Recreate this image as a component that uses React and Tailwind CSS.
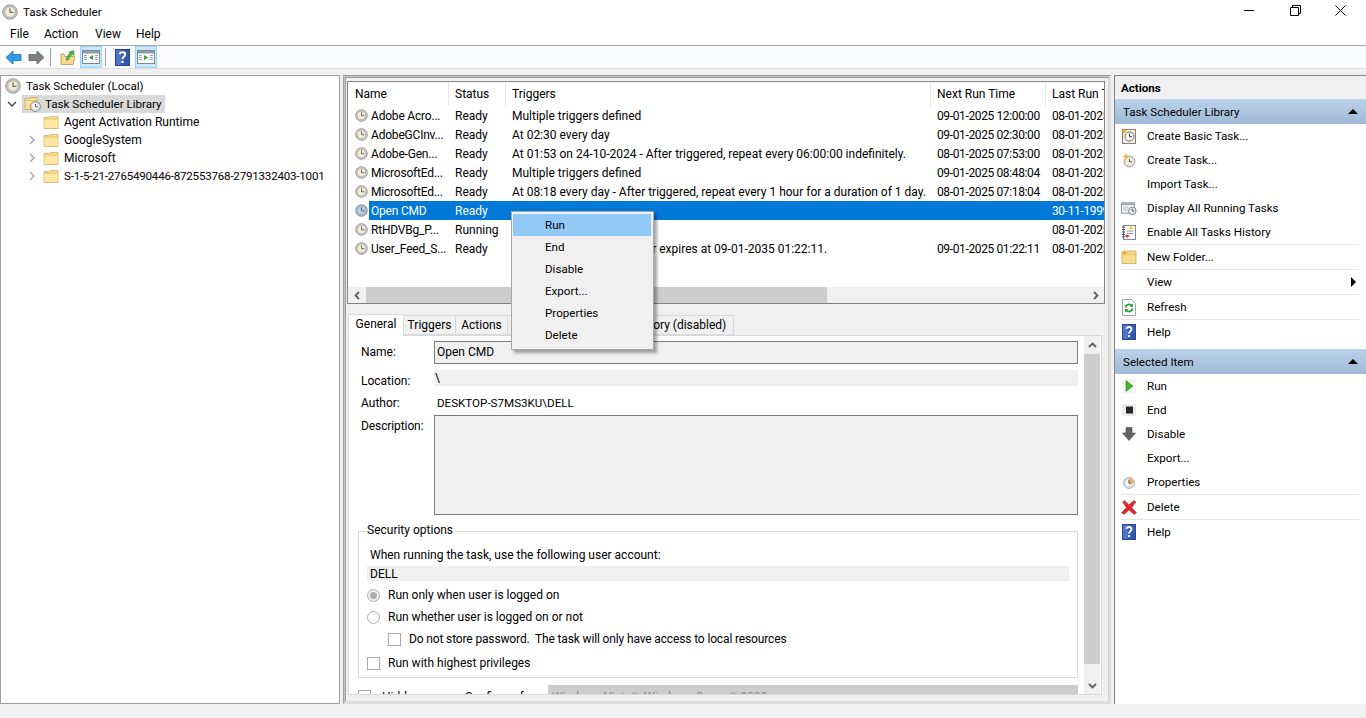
import React from "react";

const Clock = ({ s = 16, face = "#f4edd6", rim = "#c6c6c6", className = "" }) => (
  <svg width={s} height={s} viewBox="0 0 16 16" className={"shrink-0 " + className}>
    <circle cx="8" cy="8" r="7.3" fill={rim} stroke="#8d8d8d" strokeWidth="0.8" />
    <circle cx="8" cy="8" r="5.2" fill={face} stroke="#9c9c9c" strokeWidth="0.6" />
    <path d="M8 4.2V8.3H11.6" fill="none" stroke="#5a5a5a" strokeWidth="1.1" />
  </svg>
);

const Folder = ({ s = 16 }) => (
  <svg width={s} height={s} viewBox="0 0 16 16" className="shrink-0">
    <path d="M1 3.5V14.5H15V2.5H7L6 3.5Z" fill="#f7dc8f" stroke="#d0b06a" strokeWidth="0.8" />
    <path d="M1.5 5.5H14.5V14H1.5Z" fill="#fbe6a6" />
    <path d="M1.5 5H14.5" stroke="#e3bf6b" strokeWidth="0.8" />
  </svg>
);

const LibraryIcon = () => (
  <svg width="17" height="16" viewBox="0 0 17 16" className="shrink-0">
    <path d="M1 2.5V13.5H13V1.5H6.5L5.5 2.5Z" fill="#f8e09a" stroke="#c9a860" strokeWidth="0.8" />
    <path d="M1.5 4.5H12.5" stroke="#e3bf6b" strokeWidth="0.8" />
    <circle cx="11.5" cy="10.5" r="5" fill="#d9d9d9" stroke="#808080" strokeWidth="0.8" />
    <circle cx="11.5" cy="10.5" r="3.3" fill="#f4f4f4" />
    <path d="M11.5 8V10.7H13.8" fill="none" stroke="#555" strokeWidth="0.9" />
  </svg>
);

const Chevron = ({ open, className = "" }) => (
  <svg width="10" height="10" viewBox="0 0 10 10" className={"shrink-0 " + className}>
    {open ? (
      <path d="M1 3L5 7L9 3" fill="none" stroke="#404040" strokeWidth="1.3" />
    ) : (
      <path d="M3 1L7 5L3 9" fill="none" stroke="#a6a6a6" strokeWidth="1.4" />
    )}
  </svg>
);

const HelpIcon = ({ w = 15, h = 17 }) => (
  <svg width={w} height={h} viewBox="0 0 15 17" preserveAspectRatio="none" className="shrink-0">
    <rect x="0.5" y="0.5" width="14" height="16" fill="#3559ad" stroke="#27418a" />
    <rect x="1" y="1" width="5" height="15" fill="#4d74c9" />
    <path d="M4.8 5.2C5 2.6 10.2 2.4 10.2 5.4C10.2 7.6 7.5 7.6 7.5 10.2" fill="none" stroke="#fff" strokeWidth="2" />
    <rect x="6.4" y="11.8" width="2.2" height="2.2" fill="#fff" />
  </svg>
);

const PaneIcon = ({ dir }) => (
  <svg width="18" height="16" viewBox="0 0 18 16" className="shrink-0">
    <rect x="0.5" y="1.5" width="17" height="13" fill="#fff" stroke="#7c8a96" />
    <rect x="1" y="2" width="16" height="2.5" fill="#8f9ba6" />
    <rect x="2" y="6" width="3" height="1" fill="#9aa5ae" />
    <rect x="2" y="8" width="3" height="1" fill="#9aa5ae" />
    <rect x="2" y="10" width="3" height="1" fill="#9aa5ae" />
    <rect x="13" y="6" width="3" height="1" fill="#9aa5ae" />
    <rect x="13" y="8" width="3" height="1" fill="#9aa5ae" />
    <rect x="13" y="10" width="3" height="1" fill="#9aa5ae" />
    <path d={dir === "left" ? "M11 6V11L7 8.5Z" : "M7 6V11L11 8.5Z"} fill="#2fa52f" />
  </svg>
);

const Arrow = ({ color, edge, flip }) => (
  <svg width="17" height="15" viewBox="0 0 17 15" className={"shrink-0 " + (flip ? "-scale-x-100" : "")}>
    <path d="M1 7.5L8 1V4.5H16V10.5H8V14Z" fill={color} stroke={edge} strokeWidth="0.9" />
  </svg>
);

const UpFolder = () => (
  <svg width="16" height="17" viewBox="0 0 16 17" className="shrink-0">
    <path d="M1 5V15.5H13L15 7.5H5L4 5Z" fill="#f5d98c" stroke="#b8954d" strokeWidth="0.8" />
    <path d="M6 11C7 7 8 5.5 10 4.5L8.8 3L14 1.5L14 6.5L12.2 5.6C10.5 7 9 9 8.5 11Z" fill="#4fb34a" stroke="#2f8a2c" strokeWidth="0.5" />
  </svg>
);

const icons = {
  basic: (
    <svg width="16" height="17" viewBox="0 0 16 17">
      <rect x="1.5" y="1.5" width="13" height="14" fill="#f3ede0" stroke="#8a7f78" />
      <circle cx="8.5" cy="8.5" r="4.5" fill="#fff" stroke="#7a6a5a" />
      <path d="M8.5 5.5V8.7H11" fill="none" stroke="#444" />
      <path d="M3 0L4 2L6 3L4 4L3 6L2 4L0 3L2 2Z" fill="#f6a623" />
    </svg>
  ),
  create: (
    <svg width="16" height="16" viewBox="0 0 16 16">
      <circle cx="8.5" cy="9.5" r="5.5" fill="#d7d9dc" stroke="#a5a8ac" />
      <circle cx="8.5" cy="9.5" r="3.6" fill="#f7efdb" />
      <path d="M8.5 7V9.8H11" fill="none" stroke="#555" />
      <path d="M5 1L6 3.4L8.4 4.4L6 5.4L5 7.8L4 5.4L1.6 4.4L4 3.4Z" fill="#f3b233" />
    </svg>
  ),
  display: (
    <svg width="17" height="15" viewBox="0 0 17 15">
      <rect x="0.5" y="1.5" width="14" height="11" fill="#fff" stroke="#8b8f94" />
      <rect x="1" y="2" width="13" height="2" fill="#9aa0a6" />
      <path d="M2.5 6H8M2.5 8H7M2.5 10H7" stroke="#a8adb2" />
      <circle cx="12" cy="10" r="4" fill="#e4e6e8" stroke="#7d8186" />
      <path d="M12 7.8V10.2H14" fill="none" stroke="#444" />
    </svg>
  ),
  history: (
    <svg width="16" height="17" viewBox="0 0 16 17">
      <rect x="2.5" y="1.5" width="12" height="14" fill="#fdfdfd" stroke="#7e8a99" />
      <path d="M1 3H4M1 5.5H4M1 8H4M1 10.5H4M1 13H4" stroke="#44505f" />
      <path d="M6 7H12M6 9.5H12M6 12H9" stroke="#7d93b5" />
      <path d="M10 1L12.5 5H7.5Z" fill="#f5c84a" />
      <circle cx="6" cy="12" r="1.6" fill="#d73a2e" />
    </svg>
  ),
  newfolder: (
    <svg width="16" height="16" viewBox="0 0 16 16">
      <path d="M1 3V14.5H15V2H7L6 3Z" fill="#f8dd90" stroke="#c9a860" strokeWidth="0.8" />
      <path d="M1.5 5H14.5" stroke="#e3bf6b" />
      <path d="M3.5 0.5L4.5 2.5L6.5 3.5L4.5 4.5L3.5 6.5L2.5 4.5L0.5 3.5L2.5 2.5Z" fill="#f3a52a" />
    </svg>
  ),
  refresh: (
    <svg width="14" height="17" viewBox="0 0 14 17">
      <path d="M0.5 0.5H9.5L13.5 4.5V16.5H0.5Z" fill="#fff" stroke="#a0a4a8" />
      <path d="M3.5 8.5A3.6 3.6 0 0 1 10 7" fill="none" stroke="#2fa02f" strokeWidth="1.8" />
      <path d="M10.5 9.5A3.6 3.6 0 0 1 4 11" fill="none" stroke="#2fa02f" strokeWidth="1.8" />
      <path d="M11 4.5V8H7.6Z" fill="#2fa02f" />
      <path d="M3 13.5V10H6.4Z" fill="#2fa02f" />
    </svg>
  ),
  run: (
    <svg width="14" height="14" viewBox="0 0 14 14">
      <rect width="14" height="14" fill="#f5f5f5" />
      <path d="M4 1.5V12.5L11 7Z" fill="#43b02a" stroke="#2e8f1c" strokeWidth="0.6" />
    </svg>
  ),
  end: (
    <svg width="14" height="12" viewBox="0 0 14 12">
      <rect width="14" height="12" fill="#ececec" />
      <rect x="4" y="2.5" width="7" height="7" fill="#262626" />
    </svg>
  ),
  disable: (
    <svg width="14" height="14" viewBox="0 0 14 14">
      <path d="M4 0.5H10V6H13.5L7 13.5L0.5 6H4Z" fill="#636363" stroke="#4c4c4c" strokeWidth="0.6" />
    </svg>
  ),
  properties: (
    <svg width="12" height="13" viewBox="0 0 12 13">
      <circle cx="6" cy="7" r="5.5" fill="#ccd6e2" stroke="#b5bfca" />
      <circle cx="6" cy="7" r="3.6" fill="#fbf4df" />
      <path d="M6 1.5V7H11.5A5.5 5.5 0 0 0 6 1.5Z" fill="#eeb563" />
      <path d="M6 4V7.2H8.6" fill="none" stroke="#555" />
    </svg>
  ),
  del: (
    <svg width="16" height="15" viewBox="0 0 16 15">
      <path d="M1.5 2L3.5 0.5L8 4.8L12.8 0.5L15 2L10.8 7.5L15.5 12.8L13 14.5L8 10L3 14.5L0.5 12.8L5.2 7.5Z" fill="#e3262c" stroke="#b7383c" strokeWidth="0.5" />
    </svg>
  ),
  help: <HelpIcon w={14} h={16} />,
};

const rows = [
  ["Adobe Acro...", "Ready", "Multiple triggers defined", "09-01-2025 12:00:00", "08-01-2025 12:00:01"],
  ["AdobeGCInv...", "Ready", "At 02:30 every day", "09-01-2025 02:30:00", "08-01-2025 02:30:01"],
  ["Adobe-Gen...", "Ready", "At 01:53 on 24-10-2024 - After triggered, repeat every 06:00:00 indefinitely.", "08-01-2025 07:53:00", "08-01-2025 01:53:01"],
  ["MicrosoftEd...", "Ready", "Multiple triggers defined", "09-01-2025 08:48:04", "08-01-2025 08:48:05"],
  ["MicrosoftEd...", "Ready", "At 08:18 every day - After triggered, repeat every 1 hour for a duration of 1 day.", "08-01-2025 07:18:04", "08-01-2025 07:18:05"],
  ["Open CMD", "Ready", "", "", "30-11-1999 00:00:00"],
  ["RtHDVBg_P...", "Running", "", "", "08-01-2025 01:00:00"],
  ["User_Feed_S...", "Ready", "At 01:22 every day - Trigger expires at 09-01-2035 01:22:11.", "09-01-2025 01:22:11", "08-01-2025 01:22:12"],
];

const ActionItem = ({ icon, label, arrow }) => (
  <div className="h-[24px] flex items-center">
    <div className="w-[32px] h-full flex items-center pl-[6px] shrink-0">
      {icon ? <div className="w-[16px] flex items-center justify-center">{icons[icon]}</div> : null}
    </div>
    <span className="whitespace-nowrap">{label}</span>
    {arrow ? <div className="ml-auto mr-[10px] w-0 h-0 border-y-[5px] border-y-transparent border-l-[5px] border-l-black" /> : null}
  </div>
);

const Sep = () => <div className="h-px ml-[6px] mr-[7px] bg-[#e6e6e6]" />;

const SectionHead = ({ label }) => (
  <div className="h-[25px] flex items-center pl-[8px] pr-[8px] bg-gradient-to-b from-[#bad3eb] to-[#9fb9d6]">
    <span className="whitespace-nowrap">{label}</span>
    <div className="ml-auto w-0 h-0 border-x-[5px] border-x-transparent border-b-[5px] border-b-black" />
  </div>
);

const Check = ({ className = "" }) => <div className={"w-[13px] h-[13px] border border-[#a8a8a8] bg-white shrink-0 " + className} />;

const Tab = ({ label, w, active }) => (
  <div
    className={
      "flex items-center justify-center border border-[#d9d9d9] whitespace-nowrap shrink-0 " +
      (active ? "h-[22px] -mb-px bg-white border-b-white z-10 relative pb-[3px]" : "h-[20px] bg-[#f0f0f0] -ml-px")
    }
    style={{ width: w }}
  >
    {label}
  </div>
);

const TreeChild = ({ label, chev, tight }) => (
  <div className="h-[18px] flex items-center pl-[26px]">
    <div className="w-[10px] flex justify-center shrink-0">{chev ? <Chevron /> : null}</div>
    <div className="ml-[6px]"><Folder /></div>
    <span className={"ml-[5px] whitespace-nowrap " + (tight ? "text-[11.6px] tracking-[-0.22px]" : "")}>{label}</span>
  </div>
);

const SbBtn = ({ d, className = "" }) => (
  <svg width="9" height="9" viewBox="0 0 9 9" className={className}>
    <path d={d} fill="none" stroke="#606060" strokeWidth="1.8" />
  </svg>
);

const headers = [
  ["Name", 101, "pl-[7px] border-r border-[#e5e5e5]"],
  ["Status", 57, "pl-[6px] border-r border-[#e5e5e5]"],
  ["Triggers", 425, "pl-[6px] border-r border-[#e5e5e5]"],
  ["Next Run Time", 115, "pl-[6px] border-r border-[#e5e5e5]"],
  ["Last Run Time", 58, "pl-[6px]"],
];

export default function App() {
  return (
    <div className="relative w-[1366px] h-[718px] overflow-hidden flex flex-col bg-[#f0f0f0] text-[12px] text-black font-['Roboto',sans-serif] leading-[16px]">
      {/* title bar */}
      <div className="h-[23px] bg-white flex items-center pl-[2px] shrink-0">
        <Clock s={16} />
        <span className="ml-[5px] text-[11.6px]">Task Scheduler</span>
        <div className="ml-auto flex items-center pr-[2px] pb-[2px]">
          <div className="w-[46px] flex justify-center">
            <div className="w-[10px] h-px bg-black" />
          </div>
          <div className="w-[46px] flex justify-center">
            <svg width="11" height="11" viewBox="0 0 11 11">
              <path d="M0.5 2.5H8.5V10.5H0.5Z M2.5 2.5V0.5H10.5V8.5H8.5" fill="none" stroke="#000" />
            </svg>
          </div>
          <div className="w-[46px] flex justify-center pr-[1px]">
            <svg width="11" height="11" viewBox="0 0 11 11">
              <path d="M0.5 0.5L10.5 10.5M10.5 0.5L0.5 10.5" stroke="#000" />
            </svg>
          </div>
        </div>
      </div>
      {/* menu */}
      <div className="h-[23px] bg-white border-b border-[#a9a9a9] flex items-center shrink-0 pb-[1px] pl-[10px]">
        <span className="w-[34px]">File</span>
        <span className="w-[51px]">Action</span>
        <span className="w-[41px]">View</span>
        <span>Help</span>
      </div>
      {/* toolbar */}
      <div className="h-[23px] bg-[#fbfcfe] border-b border-[#e0e0e0] flex items-center shrink-0 pl-[5px]">
        <Arrow color="#2e9be8" edge="#1f7ac0" />
        <div className="ml-[6px]"><Arrow color="#7f7f7f" edge="#666666" flip /></div>
        <div className="ml-[5px] w-px h-[18px] bg-[#a0a0a0]" />
        <div className="ml-[9px]"><UpFolder /></div>
        <div className="ml-[4px] w-[22px] h-[22px] bg-[#cce8ff] border border-[#99d1ff] flex items-center justify-center"><PaneIcon dir="left" /></div>
        <div className="ml-[3px] w-px h-[18px] bg-[#a0a0a0]" />
        <div className="ml-[9px]"><HelpIcon /></div>
        <div className="ml-[5px] w-[22px] h-[22px] bg-[#cce8ff] border border-[#99d1ff] flex items-center justify-center"><PaneIcon dir="right" /></div>
      </div>

      {/* panes */}
      <div className="pt-[6px] flex h-[635px] shrink-0">
        {/* tree */}
        <div className="w-[340px] h-[629px] bg-white border border-[#a0a0a0] pt-px shrink-0 overflow-hidden">
          <div className="h-[18px] flex items-center pl-[4px]">
            <Clock s={16} />
            <span className="ml-[5px] whitespace-nowrap text-[11.6px]">Task Scheduler (Local)</span>
          </div>
          <div className="h-[18px] flex items-center pl-[6px]">
            <Chevron open />
            <div className="ml-[5px] h-[18px] w-[143px] bg-[#d9d9d9] flex items-center pl-[2px]">
              <LibraryIcon />
              <span className="ml-[4px] whitespace-nowrap text-[11.6px]">Task Scheduler Library</span>
            </div>
          </div>
          <TreeChild label="Agent Activation Runtime" />
          <TreeChild label="GoogleSystem" chev />
          <TreeChild label="Microsoft" chev />
          <TreeChild label="S-1-5-21-2765490446-872553768-2791332403-1001" chev tight />
        </div>

        {/* center */}
        <div className="ml-[3px] w-[768px] h-[629px] shrink-0 border border-[#9c9c9c] border-r-[#dcdcdc] border-b-[#dcdcdc]">
          <div className="h-full border border-[#c4c4c4] border-r-[#e0e0e0] border-b-[#e0e0e0]">
            <div className="h-full border border-[#9c9c9c] border-r-[#d0d0d0] border-b-[#dcdcdc] pl-px pt-[3px] pr-[2px]">
              {/* task list */}
              <div className="h-[223px] w-[758px] border border-[#828282] bg-white flex flex-col overflow-hidden">
                <div className="h-[24px] flex shrink-0">
                  {headers.map(([t, w, c]) => (
                    <div key={t} className={"pt-[4px] whitespace-nowrap overflow-hidden shrink-0 " + c} style={{ width: w }}>
                      {t}
                    </div>
                  ))}
                </div>
                <div className="flex-1 min-h-0">
                  {rows.map((r, i) => {
                    const sel = r[0] === "Open CMD";
                    return (
                      <div key={i} className="h-[19px] flex items-center">
                        <div className="w-[21px] pl-[7px] shrink-0">
                          <Clock s={13} face={sel ? "#b9cfe6" : "#f4edd6"} rim={sel ? "#9fb5cc" : "#c6c6c6"} />
                        </div>
                        <div className={"flex-1 h-full flex items-center whitespace-nowrap overflow-hidden " + (sel ? "bg-[#0078d7] text-white" : "")}>
                          <div className="w-[80px] pl-[2px] shrink-0 tracking-[-0.2px]">{r[0]}</div>
                          <div className="w-[57px] pl-[6px] shrink-0">{r[1]}</div>
                          <div className="w-[425px] pl-[6px] shrink-0 overflow-hidden">{r[2]}</div>
                          <div className="w-[115px] pl-[6px] shrink-0 tracking-[-0.37px]">{r[3]}</div>
                          <div className="w-[58px] pl-[6px] shrink-0 overflow-hidden tracking-[-0.37px]">{r[4]}</div>
                        </div>
                      </div>
                    );
                  })}
                </div>
                <div className="h-[16px] bg-[#f0f0f0] flex shrink-0">
                  <div className="w-[18px] flex items-center justify-center"><SbBtn d="M6 1L2.5 4.5L6 8" /></div>
                  <div className="w-[461px] bg-[#cdcdcd]" />
                  <div className="ml-auto w-[17px] flex items-center justify-center"><SbBtn d="M3 1L6.5 4.5L3 8" /></div>
                </div>
              </div>

              {/* details */}
              <div className="mt-[10px] pl-px">
                <div className="h-[21px] flex items-end">
                  <Tab label="General" w={56} active />
                  <Tab label="Triggers" w={53} />
                  <Tab label="Actions" w={53} />
                  <Tab label="Conditions" w={66} />
                  <Tab label="Settings" w={53} />
                  <Tab label="History (disabled)" w={110} />
                </div>
                <div className="h-[360px] w-[754px] bg-white border border-[#d9d9d9] flex overflow-hidden">
                  <div className="flex-1 min-w-0 overflow-hidden">
                    <div className="flex mt-[5px]">
                      <div className="w-[85px] pl-[12px] pt-[3px] shrink-0">Name:</div>
                      <div className="w-[644px] h-[23px] bg-[#f0f0f0] border border-[#7a7a7a] pl-[2px] pt-[2px] shrink-0">Open CMD</div>
                    </div>
                    <div className="flex mt-[7px]">
                      <div className="w-[85px] pl-[12px] pt-[2px] shrink-0 h-[16px]">Location:</div>
                      <div className="w-[644px] h-[16px] bg-[#f0f0f0] pl-[1px] -mt-px shrink-0">\</div>
                    </div>
                    <div className="flex mt-[8px]">
                      <div className="w-[85px] pl-[12px] shrink-0">Author:</div>
                      <div className="pl-[3px] whitespace-nowrap text-[11.6px]">DESKTOP-S7MS3KU\DELL</div>
                    </div>
                    <div className="flex mt-[4px]">
                      <div className="w-[85px] pl-[12px] pt-[3px] shrink-0 tracking-[-0.1px]">Description:</div>
                      <div className="w-[644px] h-[100px] bg-[#f0f0f0] border border-[#7a7a7a] shrink-0" />
                    </div>
                    <div className="ml-[9px] mt-[16px] w-[720px] h-[147px] border border-[#d9d9d9] shrink-0">
                      <div className="ml-[7px] -mt-[10px] w-fit px-px bg-white">Security options</div>
                      <div className="ml-[11px] mt-[9px]">When running the task, use the following user account:</div>
                      <div className="ml-[8px] mt-[3px] w-[702px] h-[15px] bg-[#f0f0f0] pl-[3px] pt-px leading-[15px]">DELL</div>
                      <div className="ml-[8px] mt-[6px] flex items-center gap-[8px]">
                        <div className="w-[13px] h-[13px] rounded-full border border-[#b0b0b0] bg-[#f0f0f0] flex items-center justify-center shrink-0">
                          <div className="w-[7px] h-[7px] rounded-full bg-[#adadad]" />
                        </div>
                        Run only when user is logged on
                      </div>
                      <div className="ml-[8px] mt-[6px] flex items-center gap-[8px]">
                        <div className="w-[13px] h-[13px] rounded-full border border-[#b0b0b0] bg-white shrink-0" />
                        Run whether user is logged on or not
                      </div>
                      <div className="ml-[29px] mt-[6px] flex items-center gap-[8px]">
                        <Check />
                        <span className="tracking-[-0.14px]">Do not store password.&nbsp; The task will only have access to local resources</span>
                      </div>
                      <div className="ml-[8px] mt-[8px] flex items-center gap-[8px]">
                        <Check />
                        Run with highest privileges
                      </div>
                    </div>
                    <div className="flex mt-[7px] ml-[9px]">
                      <Check className="mt-[5px]" />
                      <div className="ml-[11px] mt-[4px] w-[83px] shrink-0">Hidden</div>
                      <div className="mt-[4px] w-[83px] shrink-0">Configure for:</div>
                      <div className="w-[530px] h-[24px] bg-[#cccccc] pl-[4px] pt-[4px] text-[#8a8a8a] whitespace-nowrap shrink-0">Windows Vista™, Windows Server™ 2008</div>
                    </div>
                  </div>
                  <div className="w-[16px] mr-px flex flex-col shrink-0 bg-[#f0f0f0]">
                    <div className="h-[18px] flex items-center justify-center"><SbBtn d="M1 6L4.5 2.5L8 6" /></div>
                    <div className="h-[310px] bg-[#cdcdcd]" />
                    <div className="mt-auto h-[17px] flex items-center justify-center"><SbBtn d="M1 3L4.5 6.5L8 3" /></div>
                  </div>
                </div>
              </div>
            </div>
          </div>
        </div>

        {/* actions */}
        <div className="ml-[3px] w-[252px] h-[629px] shrink-0 bg-white border-l border-t border-[#828282] text-[11.6px]">
          <div className="h-[23px] bg-[#f0f0f0] flex items-center pl-[6px] font-bold">Actions</div>
          <SectionHead label="Task Scheduler Library" />
          <ActionItem icon="basic" label="Create Basic Task..." />
          <ActionItem icon="create" label="Create Task..." />
          <ActionItem label="Import Task..." />
          <ActionItem icon="display" label="Display All Running Tasks" />
          <ActionItem icon="history" label="Enable All Tasks History" />
          <Sep />
          <ActionItem icon="newfolder" label="New Folder..." />
          <Sep />
          <ActionItem label="View" arrow />
          <Sep />
          <ActionItem icon="refresh" label="Refresh" />
          <Sep />
          <ActionItem icon="help" label="Help" />
          <div className="h-[5px]" />
          <SectionHead label="Selected Item" />
          <ActionItem icon="run" label="Run" />
          <ActionItem icon="end" label="End" />
          <ActionItem icon="disable" label="Disable" />
          <ActionItem label="Export..." />
          <ActionItem icon="properties" label="Properties" />
          <Sep />
          <ActionItem icon="del" label="Delete" />
          <Sep />
          <ActionItem icon="help" label="Help" />
        </div>
      </div>

      {/* status bar */}
      <div className="flex-1 bg-[#f0f0f0]" />

      {/* context menu */}
      <div className="absolute left-[511px] top-[211px] w-[143px] h-[139px] bg-[#f0f0f0] border border-[#a8a8a8] shadow-[3px_3px_3px_rgba(0,0,0,0.35)] pt-[2px] pl-px pr-[2px] z-20 text-[11.6px]">
        {["Run", "End", "Disable", "Export...", "Properties", "Delete"].map((t, i) => (
          <div key={t} className={"h-[22px] flex items-center pl-[32px] " + (i === 0 ? "bg-[#91c9f7]" : "")}>
            {t}
          </div>
        ))}
      </div>
    </div>
  );
}
